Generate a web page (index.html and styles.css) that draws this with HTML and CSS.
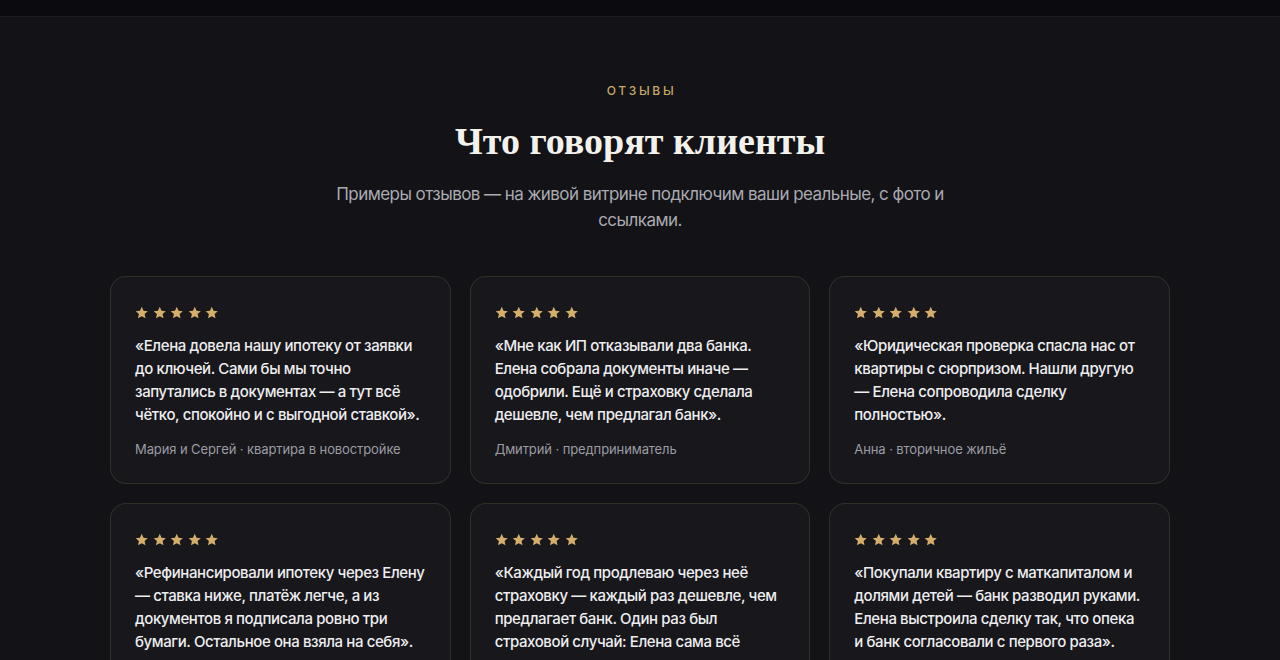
FILE: index.html
```html
<!DOCTYPE html>
<html lang="ru">
<head>
<meta charset="utf-8">
<title>Отзывы</title>
<link rel="stylesheet" href="styles.css">
</head>
<body>
<header class="topbar"></header>
<section class="reviews">
  <div class="eyebrow">ОТЗЫВЫ</div>
  <h2 class="title">Что говорят клиенты</h2>
  <p class="lead">Примеры отзывов — на живой витрине подключим ваши реальные, с фото и ссылками.</p>
  <div class="grid">
    <article class="card">
      <div class="stars"><svg viewBox="0 0 14 14"><path d="M7 .8l1.85 4.1 4.45.45-3.35 3 .97 4.4L7 10.5l-3.92 2.25.97-4.4L.7 5.35l4.45-.45z"/></svg><svg viewBox="0 0 14 14"><path d="M7 .8l1.85 4.1 4.45.45-3.35 3 .97 4.4L7 10.5l-3.92 2.25.97-4.4L.7 5.35l4.45-.45z"/></svg><svg viewBox="0 0 14 14"><path d="M7 .8l1.85 4.1 4.45.45-3.35 3 .97 4.4L7 10.5l-3.92 2.25.97-4.4L.7 5.35l4.45-.45z"/></svg><svg viewBox="0 0 14 14"><path d="M7 .8l1.85 4.1 4.45.45-3.35 3 .97 4.4L7 10.5l-3.92 2.25.97-4.4L.7 5.35l4.45-.45z"/></svg><svg viewBox="0 0 14 14"><path d="M7 .8l1.85 4.1 4.45.45-3.35 3 .97 4.4L7 10.5l-3.92 2.25.97-4.4L.7 5.35l4.45-.45z"/></svg></div>
      <p class="quote">«Елена довела нашу ипотеку от заявки до ключей. Сами бы мы точно запутались в документах — а тут всё чётко, спокойно и с выгодной ставкой».</p>
      <div class="author">Мария и Сергей · квартира в новостройке</div>
    </article>
    <article class="card">
      <div class="stars"><svg viewBox="0 0 14 14"><path d="M7 .8l1.85 4.1 4.45.45-3.35 3 .97 4.4L7 10.5l-3.92 2.25.97-4.4L.7 5.35l4.45-.45z"/></svg><svg viewBox="0 0 14 14"><path d="M7 .8l1.85 4.1 4.45.45-3.35 3 .97 4.4L7 10.5l-3.92 2.25.97-4.4L.7 5.35l4.45-.45z"/></svg><svg viewBox="0 0 14 14"><path d="M7 .8l1.85 4.1 4.45.45-3.35 3 .97 4.4L7 10.5l-3.92 2.25.97-4.4L.7 5.35l4.45-.45z"/></svg><svg viewBox="0 0 14 14"><path d="M7 .8l1.85 4.1 4.45.45-3.35 3 .97 4.4L7 10.5l-3.92 2.25.97-4.4L.7 5.35l4.45-.45z"/></svg><svg viewBox="0 0 14 14"><path d="M7 .8l1.85 4.1 4.45.45-3.35 3 .97 4.4L7 10.5l-3.92 2.25.97-4.4L.7 5.35l4.45-.45z"/></svg></div>
      <p class="quote">«Мне как ИП отказывали два банка. Елена собрала документы иначе — одобрили. Ещё и страховку сделала дешевле, чем предлагал банк».</p>
      <div class="author">Дмитрий · предприниматель</div>
    </article>
    <article class="card">
      <div class="stars"><svg viewBox="0 0 14 14"><path d="M7 .8l1.85 4.1 4.45.45-3.35 3 .97 4.4L7 10.5l-3.92 2.25.97-4.4L.7 5.35l4.45-.45z"/></svg><svg viewBox="0 0 14 14"><path d="M7 .8l1.85 4.1 4.45.45-3.35 3 .97 4.4L7 10.5l-3.92 2.25.97-4.4L.7 5.35l4.45-.45z"/></svg><svg viewBox="0 0 14 14"><path d="M7 .8l1.85 4.1 4.45.45-3.35 3 .97 4.4L7 10.5l-3.92 2.25.97-4.4L.7 5.35l4.45-.45z"/></svg><svg viewBox="0 0 14 14"><path d="M7 .8l1.85 4.1 4.45.45-3.35 3 .97 4.4L7 10.5l-3.92 2.25.97-4.4L.7 5.35l4.45-.45z"/></svg><svg viewBox="0 0 14 14"><path d="M7 .8l1.85 4.1 4.45.45-3.35 3 .97 4.4L7 10.5l-3.92 2.25.97-4.4L.7 5.35l4.45-.45z"/></svg></div>
      <p class="quote">«Юридическая проверка спасла нас от квартиры с сюрпризом. Нашли другую — Елена сопроводила сделку полностью».</p>
      <div class="author">Анна · вторичное жильё</div>
    </article>
    <article class="card">
      <div class="stars"><svg viewBox="0 0 14 14"><path d="M7 .8l1.85 4.1 4.45.45-3.35 3 .97 4.4L7 10.5l-3.92 2.25.97-4.4L.7 5.35l4.45-.45z"/></svg><svg viewBox="0 0 14 14"><path d="M7 .8l1.85 4.1 4.45.45-3.35 3 .97 4.4L7 10.5l-3.92 2.25.97-4.4L.7 5.35l4.45-.45z"/></svg><svg viewBox="0 0 14 14"><path d="M7 .8l1.85 4.1 4.45.45-3.35 3 .97 4.4L7 10.5l-3.92 2.25.97-4.4L.7 5.35l4.45-.45z"/></svg><svg viewBox="0 0 14 14"><path d="M7 .8l1.85 4.1 4.45.45-3.35 3 .97 4.4L7 10.5l-3.92 2.25.97-4.4L.7 5.35l4.45-.45z"/></svg><svg viewBox="0 0 14 14"><path d="M7 .8l1.85 4.1 4.45.45-3.35 3 .97 4.4L7 10.5l-3.92 2.25.97-4.4L.7 5.35l4.45-.45z"/></svg></div>
      <p class="quote">«Рефинансировали ипотеку через Елену — ставка ниже, платёж легче, а из документов я подписала ровно три бумаги. Остальное она взяла на себя».</p>
      <div class="author">Ольга · рефинансирование</div>
    </article>
    <article class="card">
      <div class="stars"><svg viewBox="0 0 14 14"><path d="M7 .8l1.85 4.1 4.45.45-3.35 3 .97 4.4L7 10.5l-3.92 2.25.97-4.4L.7 5.35l4.45-.45z"/></svg><svg viewBox="0 0 14 14"><path d="M7 .8l1.85 4.1 4.45.45-3.35 3 .97 4.4L7 10.5l-3.92 2.25.97-4.4L.7 5.35l4.45-.45z"/></svg><svg viewBox="0 0 14 14"><path d="M7 .8l1.85 4.1 4.45.45-3.35 3 .97 4.4L7 10.5l-3.92 2.25.97-4.4L.7 5.35l4.45-.45z"/></svg><svg viewBox="0 0 14 14"><path d="M7 .8l1.85 4.1 4.45.45-3.35 3 .97 4.4L7 10.5l-3.92 2.25.97-4.4L.7 5.35l4.45-.45z"/></svg><svg viewBox="0 0 14 14"><path d="M7 .8l1.85 4.1 4.45.45-3.35 3 .97 4.4L7 10.5l-3.92 2.25.97-4.4L.7 5.35l4.45-.45z"/></svg></div>
      <p class="quote">«Каждый год продлеваю через неё страховку — каждый раз дешевле, чем предлагает банк. Один раз был страховой случай: Елена сама всё урегулировала».</p>
      <div class="author">Игорь · страхование</div>
    </article>
    <article class="card">
      <div class="stars"><svg viewBox="0 0 14 14"><path d="M7 .8l1.85 4.1 4.45.45-3.35 3 .97 4.4L7 10.5l-3.92 2.25.97-4.4L.7 5.35l4.45-.45z"/></svg><svg viewBox="0 0 14 14"><path d="M7 .8l1.85 4.1 4.45.45-3.35 3 .97 4.4L7 10.5l-3.92 2.25.97-4.4L.7 5.35l4.45-.45z"/></svg><svg viewBox="0 0 14 14"><path d="M7 .8l1.85 4.1 4.45.45-3.35 3 .97 4.4L7 10.5l-3.92 2.25.97-4.4L.7 5.35l4.45-.45z"/></svg><svg viewBox="0 0 14 14"><path d="M7 .8l1.85 4.1 4.45.45-3.35 3 .97 4.4L7 10.5l-3.92 2.25.97-4.4L.7 5.35l4.45-.45z"/></svg><svg viewBox="0 0 14 14"><path d="M7 .8l1.85 4.1 4.45.45-3.35 3 .97 4.4L7 10.5l-3.92 2.25.97-4.4L.7 5.35l4.45-.45z"/></svg></div>
      <p class="quote">«Покупали квартиру с маткапиталом и долями детей — банк разводил руками. Елена выстроила сделку так, что опека и банк согласовали с первого раза».</p>
      <div class="author">Семья Ковалёвых · маткапитал</div>
    </article>
  </div>
</section>
</body>
</html>
```

FILE: styles.css
```css
* { box-sizing: border-box; }
html, body { margin: 0; padding: 0; }
body {
  background: #121217;
  color: #ececef;
  font-family: Inter, "Noto Sans", "Liberation Sans", sans-serif;
  overflow: hidden;
}
.topbar {
  height: 17px;
  background: #0b0b0f;
  border-bottom: 1px solid #1c1c22;
}
.reviews {
  padding: 65px 0 80px;
  display: flex;
  flex-direction: column;
  align-items: center;
}
.eyebrow {
  font-size: 12px;
  line-height: 18px;
  letter-spacing: 2.7px;
  color: #c9a86a;
  font-weight: 500;
  padding-left: 3px;
}
.title {
  margin: 18px 0 0;
  font-family: "Liberation Serif", "DejaVu Serif", serif;
  font-weight: 700;
  font-size: 38px;
  line-height: 46px;
  color: #f3f1ec;
}
.lead {
  margin: 17px 0 0;
  max-width: 620px;
  text-align: center;
  font-size: 17px;
  line-height: 26px;
  letter-spacing: -0.55px;
  color: #aaaab0;
}
.grid {
  margin-top: 43px;
  width: 1060px;
  display: grid;
  grid-template-columns: repeat(3, 1fr);
  gap: 19px;
}
.card {
  background: #17171c;
  border: 1px solid rgba(201, 168, 106, 0.16);
  border-radius: 16px;
  padding: 29px 24px 24px;
}
.stars {
  display: flex;
  gap: 4px;
  height: 14px;
}
.stars svg {
  width: 13.5px;
  height: 13.5px;
  fill: #d4ae6a;
}
.quote {
  margin: 14px 0 0;
  font-size: 15px;
  line-height: 23px;
  font-weight: 500;
  letter-spacing: -0.4px;
  color: #eeeef0;
}
.author {
  margin-top: 13px;
  font-size: 13px;
  line-height: 20px;
  letter-spacing: -0.1px;
  color: #9c9ca3;
}
```
